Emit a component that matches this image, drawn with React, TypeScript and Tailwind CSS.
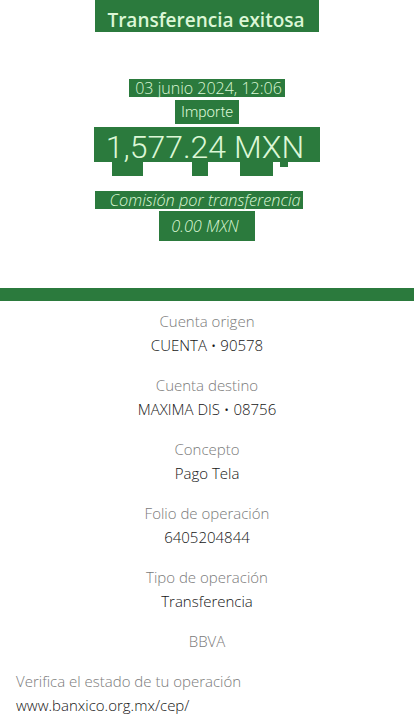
import React from "react";

const G = "bg-[#2b7a3d]";
const OS = { fontFamily: "'Open Sans', Roboto, sans-serif" };
const RB = { fontFamily: "Roboto, 'Open Sans', sans-serif" };

function Detail({ label, value }: { label: string; value: string }) {
  return (
    <div className="flex flex-col items-center">
      <div className="text-[15px] leading-[24px] font-light text-[#7a7a7a]">{label}</div>
      <div className="text-[15px] leading-[24px] font-light text-[#151515]">{value}</div>
    </div>
  );
}

export default function App() {
  return (
    <div className="w-[414px] h-[725px] bg-white overflow-hidden" style={OS}>
      {/* Top summary */}
      <div className="flex flex-col items-center text-[#dcf7d6]">
        <div className={`${G} pl-[12px] pr-[14px] pt-[8px] text-[19px] leading-[24px] font-semibold`}>
          Transferencia exitosa
        </div>
        <div className={`mt-[47px] ${G} pl-[6px] pr-[3px] text-[16px] leading-[18px] font-light`}>
          03 junio 2024, 12:06
        </div>
        <div className={`mt-[3px] ${G} px-[6px] text-[15px] leading-[24px] font-light`} style={RB}>
          Importe
        </div>
        <div
          className={`mt-[3px] ${G} pl-[12px] pr-[16px] pt-[3px] h-[35px] text-[32px] leading-[34px] font-light`}
          style={RB}
        >
          1,577.24 MXN
        </div>
        <div className="w-full flex h-[14px] items-start">
          <div className={`ml-[112px] w-[31px] h-[14px] shrink-0 ${G}`} />
          <div className={`ml-[49px] w-[16px] h-[14px] shrink-0 ${G}`} />
          <div className={`ml-[32px] w-[33px] h-[14px] shrink-0 ${G}`} />
          <div className={`ml-[7px] w-[8px] h-[5px] shrink-0 ${G}`} />
        </div>
        <div className={`mt-[15px] mr-[16px] ${G} pl-[14px] pr-[2px] text-[16.3px] leading-[18px] font-light italic`}>
          Comisión por transferencia
        </div>
        <div className={`mt-[2px] ${G} pl-[12px] pr-[16px] pt-[4px] h-[30px] text-[16.3px] leading-[22px] font-light italic`}>
          0.00 MXN
        </div>
      </div>

      {/* Green divider */}
      <div className={`mt-[47px] h-[13px] w-full ${G}`} />

      {/* Details */}
      <div className="pt-[8px] flex flex-col gap-[16px]">
        <Detail label="Cuenta origen" value="CUENTA • 90578" />
        <Detail label="Cuenta destino" value="MAXIMA DIS • 08756" />
        <Detail label="Concepto" value="Pago Tela" />
        <Detail label="Folio de operación" value="6405204844" />
        <Detail label="Tipo de operación" value="Transferencia" />
        <div className="text-center text-[15px] leading-[24px] font-light text-[#7a7a7a]">BBVA</div>
      </div>

      <div className="px-[16px] pt-[16px]">
        <div className="text-[15px] leading-[24px] font-light text-[#7a7a7a]">
          Verifica el estado de tu operación
        </div>
        <div className="text-[15px] leading-[24px] font-light text-[#151515]">
          www.banxico.org.mx/cep/
        </div>
      </div>
    </div>
  );
}
